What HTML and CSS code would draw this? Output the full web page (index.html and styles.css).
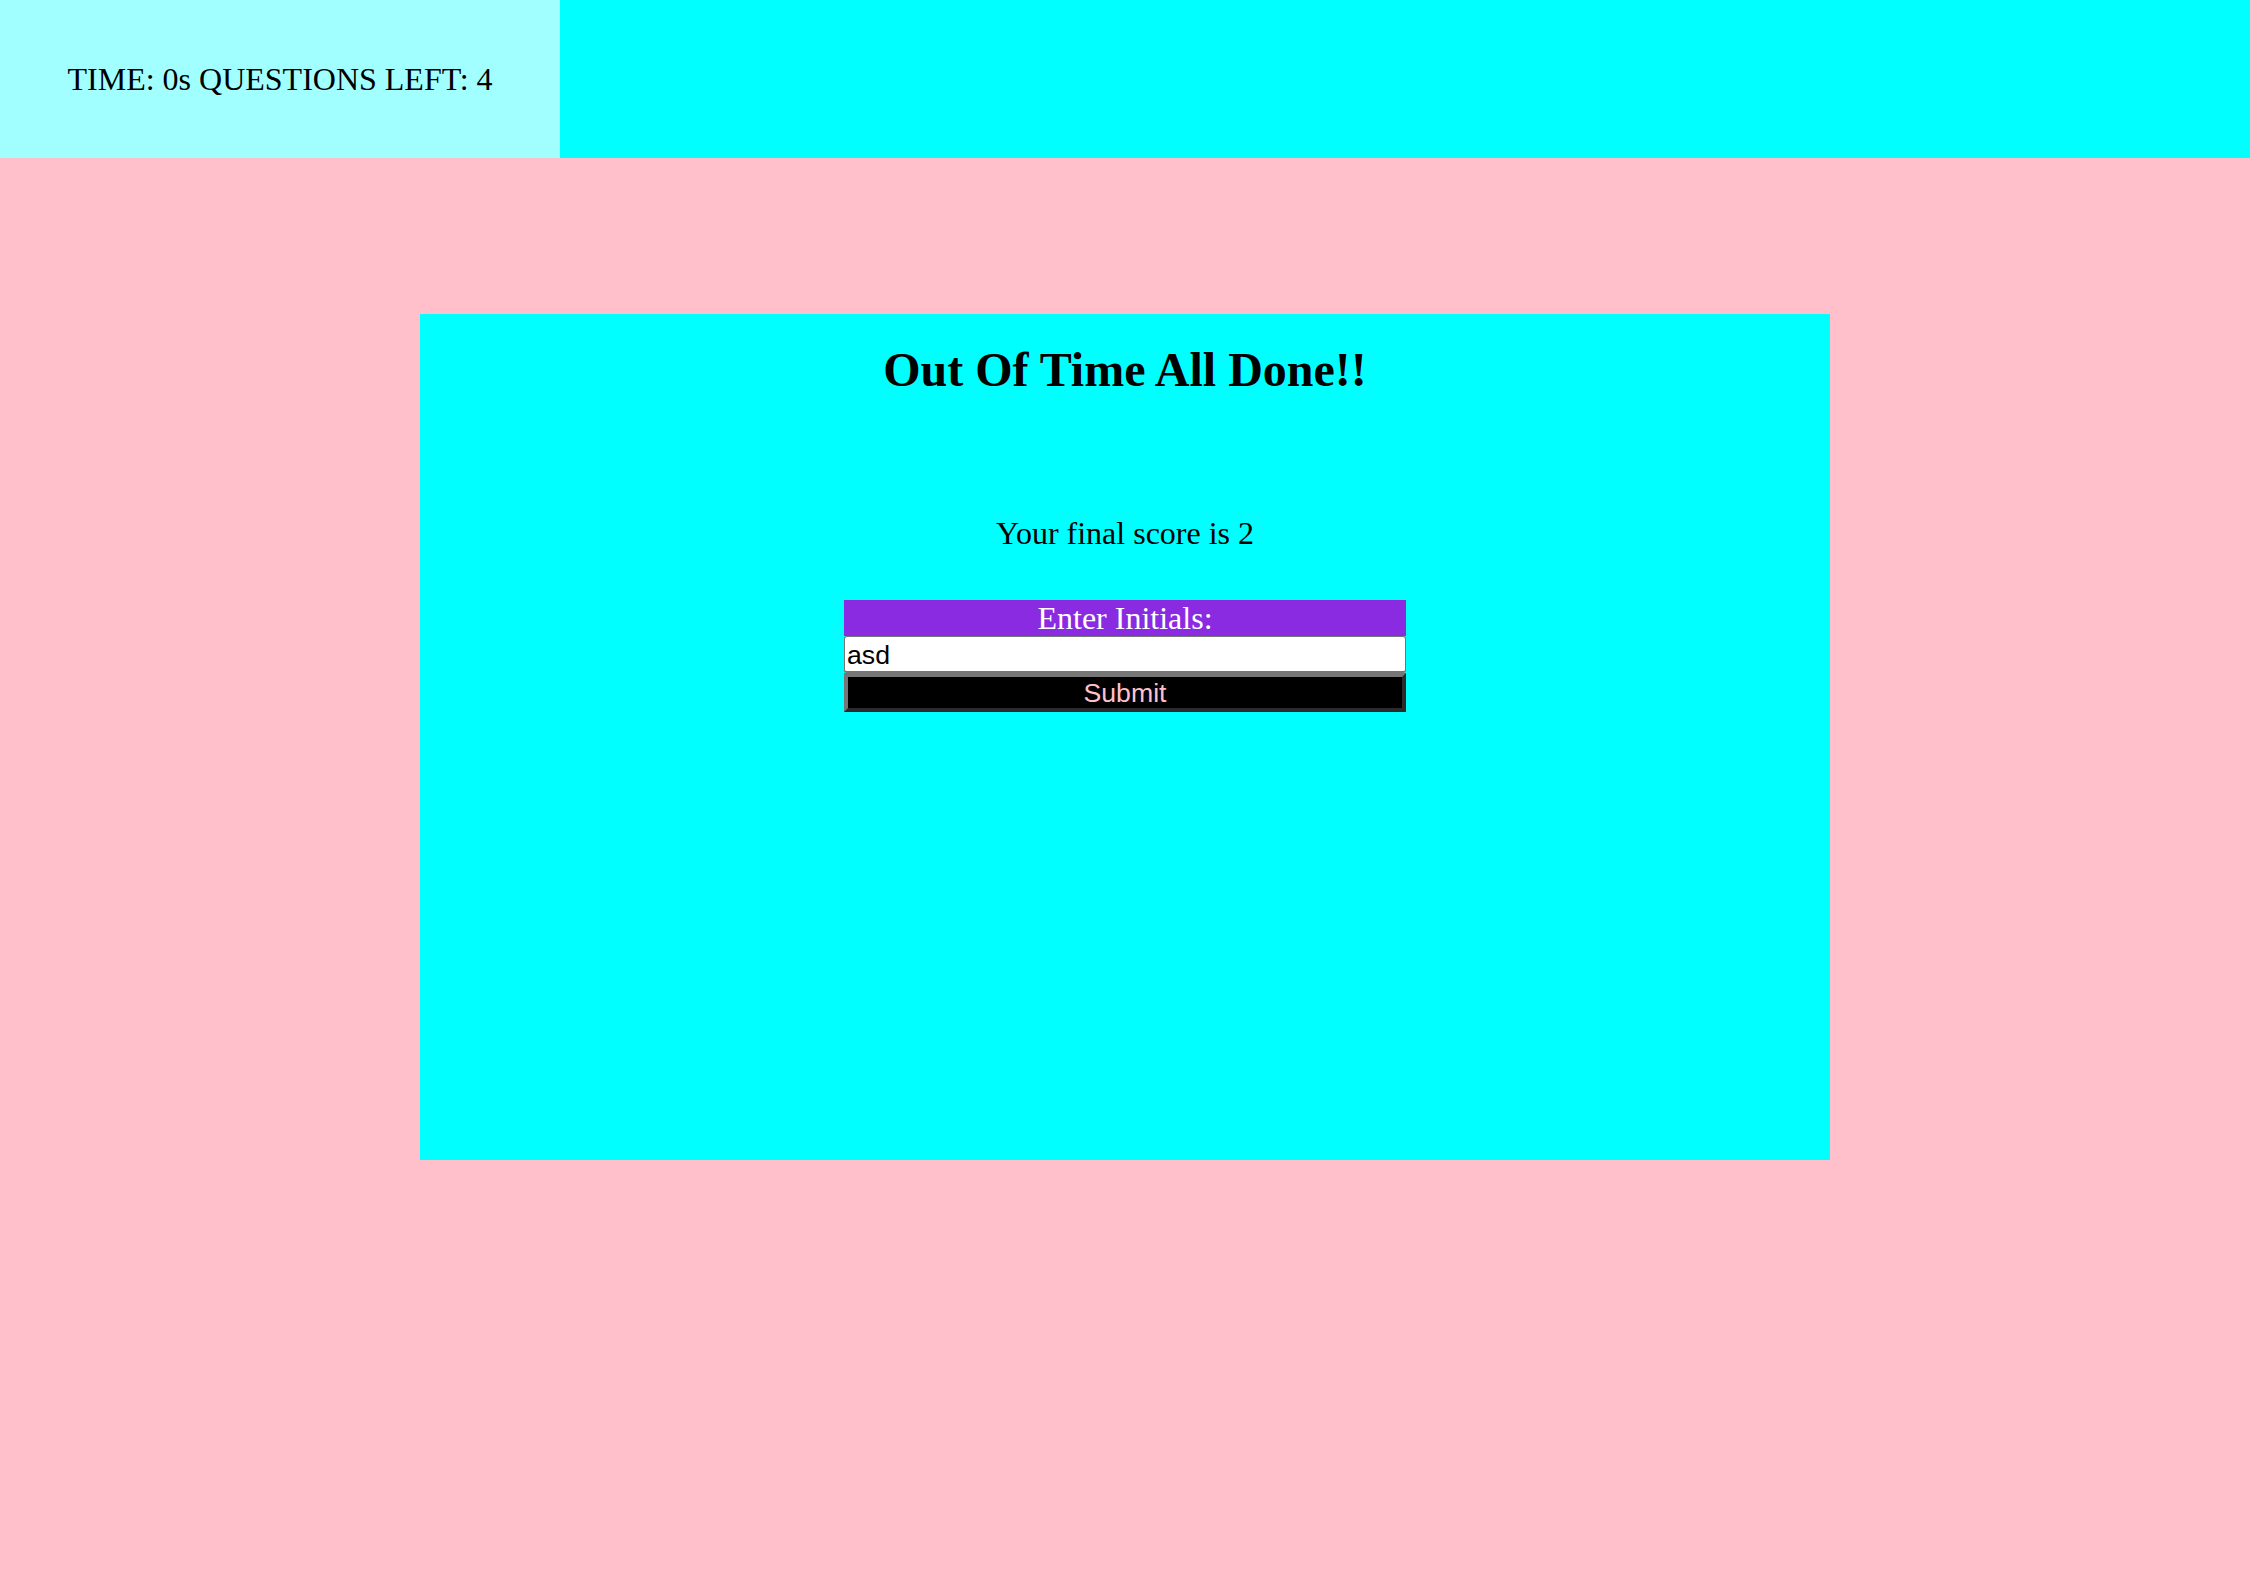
FILE: index.html
```html
<!DOCTYPE html>
<html>
<head>
<meta charset="utf-8">
<title>Quiz</title>
<link rel="stylesheet" href="styles.css">
</head>
<body>
<header class="topbar">
  <div class="status">TIME: 0s QUESTIONS LEFT: 4</div>
</header>
<main class="page">
  <section class="card">
    <h1 class="title">Out Of Time All Done!!</h1>
    <p class="score">Your final score is 2</p>
    <form class="initials-form">
      <label class="initials-label" for="initials">Enter Initials:</label>
      <input class="initials-input" id="initials" type="text" value="asd">
      <button class="submit-btn" type="button">Submit</button>
    </form>
  </section>
</main>
</body>
</html>
```
FILE: styles.css
```css
html, body {
  margin: 0;
  padding: 0;
}
body {
  background: #ffc0cb;
  font-family: "Liberation Serif", "Times New Roman", serif;
  width: 2250px;
  height: 1570px;
  overflow: hidden;
}
.topbar {
  display: flex;
  height: 158px;
  background: #00ffff;
}
.status {
  width: 560px;
  background: #a2ffff;
  display: flex;
  align-items: center;
  justify-content: center;
  font-size: 32px;
  color: #000;
}
.page {
  padding-top: 156px;
}
.card {
  width: 1410px;
  height: 846px;
  margin: 0 auto;
  background: #00ffff;
  text-align: center;
  display: flex;
  flex-direction: column;
  align-items: center;
}
.title {
  margin: 28px 0 0;
  font-size: 48px;
  line-height: 55px;
  font-weight: bold;
}
.score {
  margin: 118px 0 0;
  font-size: 32px;
  line-height: 37px;
}
.initials-form {
  width: 562px;
  margin-top: 48px;
  display: flex;
  flex-direction: column;
}
.initials-label {
  background: #8a2be2;
  color: #fff;
  font-size: 32px;
  line-height: 36px;
  height: 36px;
}
.initials-input {
  font-family: "Liberation Sans", Arial, sans-serif;
  font-size: 26.67px;
  height: 37px;
  box-sizing: border-box;
  border: 1px solid #767676;
  border-bottom-width: 2px;
  border-radius: 3px;
  padding: 2px 2px 0;
  margin: 0;
  background: #fff;
  color: #000;
}
.submit-btn {
  font-family: "Liberation Sans", Arial, sans-serif;
  font-size: 26.67px;
  height: 39px;
  box-sizing: border-box;
  margin: 0;
  padding: 0 6px;
  background: #000;
  color: #ffc0cb;
  border: 4px solid;
  border-color: #767676 #2b2b2b #2b2b2b #767676;
  line-height: 30px;
}
```
